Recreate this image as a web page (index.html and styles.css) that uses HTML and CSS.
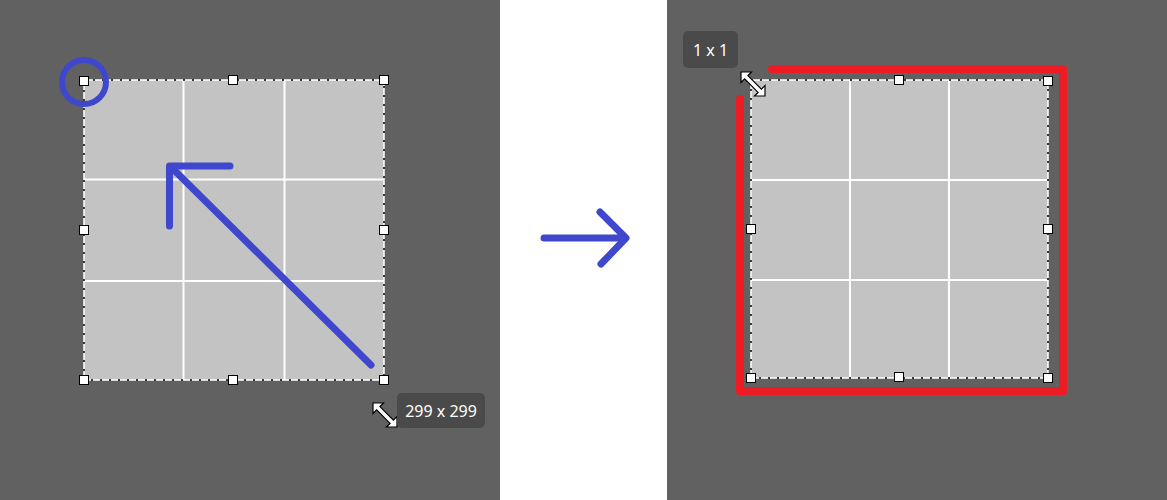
FILE: index.html
```html
<!DOCTYPE html>
<html>
<head>
<meta charset="utf-8">
<link rel="stylesheet" href="styles.css">
</head>
<body>
<div class="stage">
  <div class="panel dark">
    <svg class="canvas" width="500" height="500" viewBox="0 0 500 500">
      <rect x="84" y="80" width="300" height="300" fill="#c3c3c3"/>
      <g stroke="#ffffff" stroke-width="2">
        <line x1="183.5" y1="80" x2="183.5" y2="380"/>
        <line x1="284.5" y1="80" x2="284.5" y2="380"/>
        <line x1="84" y1="179.5" x2="384" y2="179.5"/>
        <line x1="84" y1="281" x2="384" y2="281"/>
      </g>
      <rect x="84" y="80" width="300" height="300" fill="none" stroke="#ffffff" stroke-width="1.5"/>
      <rect x="84" y="80" width="300" height="300" fill="none" stroke="#000000" stroke-width="1.5" stroke-dasharray="2 7"/>
      <g fill="#ffffff" stroke="#000000" stroke-width="1">
        <rect x="79.5" y="76.5" width="9" height="9"/>
        <rect x="228.5" y="75.5" width="9" height="9"/>
        <rect x="379.5" y="75.5" width="9" height="9"/>
        <rect x="79.5" y="225.5" width="9" height="9"/>
        <rect x="379.5" y="225.5" width="9" height="9"/>
        <rect x="79.5" y="375.5" width="9" height="9"/>
        <rect x="228.5" y="375.5" width="9" height="9"/>
        <rect x="379.5" y="375.5" width="9" height="9"/>
      </g>
      <circle cx="84" cy="82" r="22" fill="none" stroke="#3f48cc" stroke-width="6"/>
      <g stroke="#3f48cc" stroke-width="7" stroke-linecap="round" fill="none">
        <line x1="371" y1="365" x2="172" y2="168"/>
        <polyline points="230,166 169.5,166 169.5,226" stroke-linejoin="round"/>
      </g>
      <g transform="translate(373 403) scale(1.5)">
        <polygon points="0,0 7,0 4.6,2.4 13.6,11.4 16,9 16,16 9,16 11.4,13.6 2.4,4.6 0,7" fill="#ffffff" stroke="#000000" stroke-width="0.8" stroke-linejoin="miter"/>
      </g>
    </svg>
    <div class="tip tip-size">299 x 299</div>
  </div>
  <div class="panel light">
    <svg class="canvas" width="167" height="500" viewBox="0 0 167 500">
      <g stroke="#3f48cc" stroke-width="7" stroke-linecap="round" stroke-linejoin="round" fill="none">
        <line x1="44" y1="238" x2="124" y2="238"/>
        <polyline points="100,212 126,238 101,264"/>
      </g>
    </svg>
  </div>
  <div class="panel dark">
    <svg class="canvas" width="500" height="500" viewBox="0 0 500 500">
      <rect x="84" y="80" width="297" height="298" fill="#c3c3c3"/>
      <g stroke="#ffffff" stroke-width="2">
        <line x1="183" y1="80" x2="183" y2="378"/>
        <line x1="282" y1="80" x2="282" y2="378"/>
        <line x1="84" y1="180" x2="381" y2="180"/>
        <line x1="84" y1="280" x2="381" y2="280"/>
      </g>
      <rect x="84" y="80" width="297" height="298" fill="none" stroke="#ffffff" stroke-width="1.5"/>
      <rect x="84" y="80" width="297" height="298" fill="none" stroke="#000000" stroke-width="1.5" stroke-dasharray="2 7"/>
      <polyline points="105,69 396,69 396,391 73,391 73,99" fill="none" stroke="#ed1c24" stroke-width="8" stroke-linecap="round" stroke-linejoin="round"/>
      <g fill="#ffffff" stroke="#000000" stroke-width="1">
        <rect x="227.5" y="75.5" width="9" height="9"/>
        <rect x="376.5" y="76.5" width="9" height="9"/>
        <rect x="79.5" y="224.5" width="9" height="9"/>
        <rect x="376.5" y="224.5" width="9" height="9"/>
        <rect x="79.5" y="373.5" width="9" height="9"/>
        <rect x="227.5" y="372.5" width="9" height="9"/>
        <rect x="376.5" y="373.5" width="9" height="9"/>
      </g>
      <g transform="translate(74 72) scale(1.5)">
        <polygon points="0,0 7,0 4.6,2.4 13.6,11.4 16,9 16,16 9,16 11.4,13.6 2.4,4.6 0,7" fill="#ffffff" stroke="#000000" stroke-width="0.8"/>
      </g>
    </svg>
    <div class="tip tip-one">1 x 1</div>
  </div>
</div>
</body>
</html>
```

FILE: styles.css
```css
html, body {
  margin: 0;
  padding: 0;
  background: #ffffff;
}
.stage {
  display: flex;
  width: 1167px;
  height: 500px;
}
.panel {
  position: relative;
  height: 500px;
  flex: none;
}
.panel.dark {
  width: 500px;
  background: #616161;
}
.panel.light {
  width: 167px;
  background: #ffffff;
}
.canvas {
  display: block;
}
.tip {
  position: absolute;
  display: flex;
  align-items: center;
  justify-content: center;
  background: #4a4a4a;
  border-radius: 5px;
  color: #ffffff;
  font-family: "Noto Sans", "Open Sans", sans-serif;
  font-size: 16px;
  line-height: 1;
}
.tip-size {
  left: 397px;
  top: 393px;
  width: 88px;
  height: 35px;
}
.tip-one {
  left: 16px;
  top: 31px;
  width: 55px;
  height: 37px;
}
```
